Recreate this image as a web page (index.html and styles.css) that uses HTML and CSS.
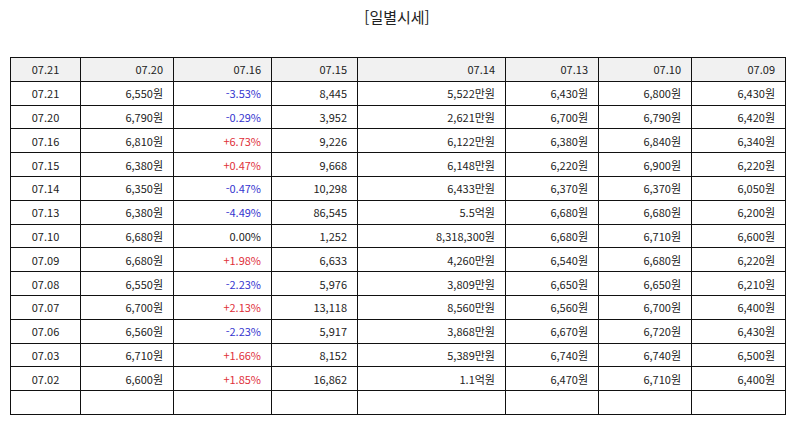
FILE: index.html
```html
<!DOCTYPE html>
<html lang="ko">
<head>
<meta charset="utf-8">
<link rel="stylesheet" href="styles.css">
</head>
<body>
<h1 class="title">[일별시세]</h1>
<table class="grid">
  <colgroup>
    <col class="c1"><col class="c2"><col class="c3"><col class="c4"><col class="c5"><col class="c6"><col class="c7"><col class="c8">
  </colgroup>
  <thead>
    <tr><th class="ctr">07.21</th><th>07.20</th><th>07.16</th><th>07.15</th><th>07.14</th><th>07.13</th><th>07.10</th><th>07.09</th></tr>
  </thead>
  <tbody>
    <tr><td class="ctr">07.21</td><td>6,550원</td><td class="dn">-3.53%</td><td>8,445</td><td>5,522만원</td><td>6,430원</td><td>6,800원</td><td>6,430원</td></tr>
    <tr><td class="ctr">07.20</td><td>6,790원</td><td class="dn">-0.29%</td><td>3,952</td><td>2,621만원</td><td>6,700원</td><td>6,790원</td><td>6,420원</td></tr>
    <tr><td class="ctr">07.16</td><td>6,810원</td><td class="up">+6.73%</td><td>9,226</td><td>6,122만원</td><td>6,380원</td><td>6,840원</td><td>6,340원</td></tr>
    <tr><td class="ctr">07.15</td><td>6,380원</td><td class="up">+0.47%</td><td>9,668</td><td>6,148만원</td><td>6,220원</td><td>6,900원</td><td>6,220원</td></tr>
    <tr><td class="ctr">07.14</td><td>6,350원</td><td class="dn">-0.47%</td><td>10,298</td><td>6,433만원</td><td>6,370원</td><td>6,370원</td><td>6,050원</td></tr>
    <tr><td class="ctr">07.13</td><td>6,380원</td><td class="dn">-4.49%</td><td>86,545</td><td>5.5억원</td><td>6,680원</td><td>6,680원</td><td>6,200원</td></tr>
    <tr><td class="ctr">07.10</td><td>6,680원</td><td>0.00%</td><td>1,252</td><td>8,318,300원</td><td>6,680원</td><td>6,710원</td><td>6,600원</td></tr>
    <tr><td class="ctr">07.09</td><td>6,680원</td><td class="up">+1.98%</td><td>6,633</td><td>4,260만원</td><td>6,540원</td><td>6,680원</td><td>6,220원</td></tr>
    <tr><td class="ctr">07.08</td><td>6,550원</td><td class="dn">-2.23%</td><td>5,976</td><td>3,809만원</td><td>6,650원</td><td>6,650원</td><td>6,210원</td></tr>
    <tr><td class="ctr">07.07</td><td>6,700원</td><td class="up">+2.13%</td><td>13,118</td><td>8,560만원</td><td>6,560원</td><td>6,700원</td><td>6,400원</td></tr>
    <tr><td class="ctr">07.06</td><td>6,560원</td><td class="dn">-2.23%</td><td>5,917</td><td>3,868만원</td><td>6,670원</td><td>6,720원</td><td>6,430원</td></tr>
    <tr><td class="ctr">07.03</td><td>6,710원</td><td class="up">+1.66%</td><td>8,152</td><td>5,389만원</td><td>6,740원</td><td>6,740원</td><td>6,500원</td></tr>
    <tr><td class="ctr">07.02</td><td>6,600원</td><td class="up">+1.85%</td><td>16,862</td><td>1.1억원</td><td>6,470원</td><td>6,710원</td><td>6,400원</td></tr>
    <tr><td></td><td></td><td></td><td></td><td></td><td></td><td></td><td></td></tr>
  </tbody>
</table>
</body>
</html>
```

FILE: styles.css
```css
html, body {
  margin: 0;
  padding: 0;
  background: #ffffff;
}
body {
  font-family: "Noto Sans CJK KR", "Noto Sans", sans-serif;
  color: #222222;
}
.title {
  margin: 0;
  padding-top: 6px;
  height: 57px;
  box-sizing: border-box;
  text-align: center;
  font-size: 15px;
  font-weight: normal;
  line-height: 22px;
  color: #222222;
}
.grid {
  margin-left: 10px;
  width: 776px;
  border-collapse: collapse;
  table-layout: fixed;
  font-size: 11px;
}
.c1 { width: 70px; }
.c2 { width: 93px; }
.c3 { width: 98px; }
.c4 { width: 86px; }
.c5 { width: 148px; }
.c6 { width: 93px; }
.c7 { width: 93px; }
.c8 { width: 94px; }
.grid tr {
  height: 23.8px;
}
.grid th,
.grid td {
  border: 1px solid #111111;
  padding: 0 10px 0 4px;
  text-align: right;
  font-weight: normal;
  line-height: 14px;
  white-space: nowrap;
  color: #222222;
}
.grid th {
  background: #f1f1f1;
}
.grid .ctr {
  text-align: center;
  padding: 0;
}
.grid .dn { color: #3535cf; }
.grid .up { color: #e0303a; }
```
